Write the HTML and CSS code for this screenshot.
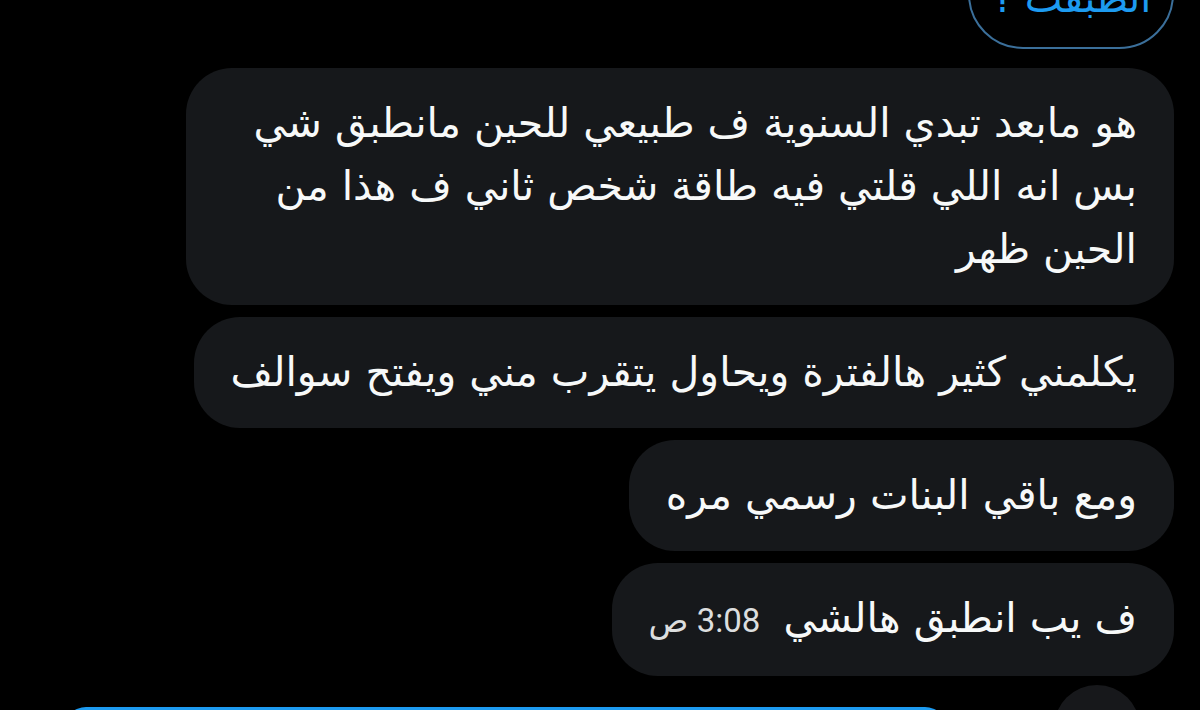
FILE: index.html
```html
<!DOCTYPE html>
<html lang="ar" dir="rtl">
<head>
    <meta charset="UTF-8">
    <meta name="viewport" content="width=device-width, initial-scale=1.0">
    <title>Messages</title>
    <link rel="stylesheet" href="styles.css">
</head>
<body>

    <div class="thread">
        <div class="reply-chip">انطبقت ؟</div>

        <div class="bubble bubble-wide">هو مابعد تبدي السنوية ف طبيعي للحين مانطبق شي<br>بس انه اللي قلتي فيه طاقة شخص ثاني ف هذا من<br>الحين ظهر</div>
        <div class="bubble">يكلمني كثير هالفترة ويحاول يتقرب مني ويفتح سوالف</div>
        <div class="bubble">ومع باقي البنات رسمي مره</div>
        <div class="bubble">
            <span>ف يب انطبق هالشي</span>
            <span class="time">3:08 ص</span>
        </div>

        <div class="next-row">
            <div class="avatar"></div>
            <div class="incoming"></div>
        </div>
    </div>

</body>
</html>
```

FILE: styles.css
```css
body {
    margin: 0;
    background-color: #000000;
    color: #f7f9f9;
    font-family: 'DejaVu Sans', 'Noto Sans', sans-serif;
    height: 710px;
    overflow: hidden;
}
.thread {
    display: flex;
    flex-direction: column;
    align-items: flex-start; /* right side in rtl */
    gap: 12px;
    padding: 0 26px 0 0;
    margin-top: -62px;
}
.reply-chip {
    width: 206px;
    box-sizing: border-box;
    height: 111px;
    border: 2px solid #3b6f9a;
    border-radius: 55px;
    color: #1d9bf0;
    font-size: 40px;
    display: flex;
    align-items: center;
    justify-content: center;
    padding-top: 8px;
    margin-bottom: 7px;
}
.bubble {
    background-color: #16181b;
    border-radius: 46px;
    padding: 24px 37px;
    font-size: 41px;
    line-height: 63px;
    box-sizing: border-box;
    white-space: nowrap;
}
.bubble-wide {
    width: 988px;
}
.time {
    font-family: 'Roboto', 'DejaVu Sans', sans-serif;
    font-size: 33px;
    color: #dcdedf;
    margin-right: 10px;
}
.next-row {
    display: flex;
    align-items: flex-start;
    width: 100%;
    margin-top: -3px;
}
.avatar {
    width: 86px;
    height: 86px;
    border-radius: 50%;
    background-color: #17181b;
    margin-right: 34px;
}
.incoming {
    width: 883px;
    height: 120px;
    margin-top: 22px;
    margin-right: 107px;
    background-color: #1d9bf0;
    border-radius: 22px;
}
```
